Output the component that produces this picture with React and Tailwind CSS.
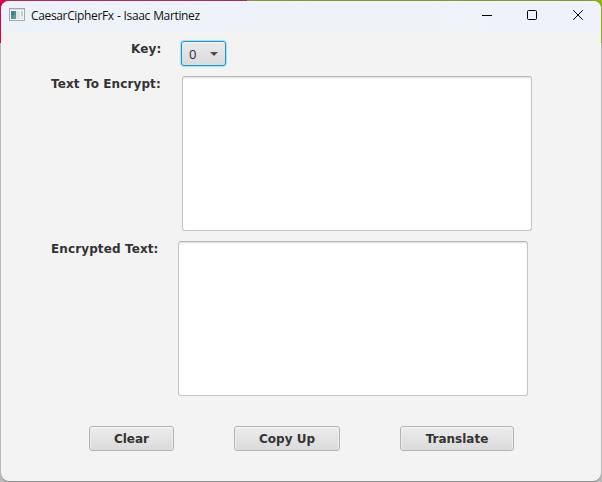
function AppIcon() {
  return (
    <svg width="16" height="14" viewBox="0 0 16 14" shapeRendering="crispEdges" className="shrink-0">
      <rect x="0.5" y="0.5" width="15" height="12" fill="#f4f6f7" stroke="#a3a9ad" />
      <rect x="1" y="1" width="14" height="1" fill="#d5dadd" />
      <rect x="2" y="3" width="5" height="8" fill="#4d8f94" />
      <rect x="2" y="3" width="3" height="4" fill="#4578a0" />
      <rect x="4" y="7" width="3" height="4" fill="#58a184" />
      <rect x="7" y="3" width="4" height="8" fill="#e2e5e7" />
      <rect x="12" y="3" width="2" height="5" fill="#b9d3c6" />
      <rect x="12" y="8" width="2" height="3" fill="#dfe4e6" />
    </svg>
  );
}

function TitleBar() {
  return (
    <header className="flex h-[31px] items-start bg-linear-to-r from-[#ecf3f8] to-[#eff2fa] pl-2">
      <div className="pt-[7px]">
        <AppIcon />
      </div>
      <h1 className="ml-1.5 pt-[6px] font-['Open_Sans',sans-serif] text-[12px] leading-[18px] font-normal tracking-[-0.35px] [word-spacing:0.4px] whitespace-nowrap text-[#111]">
        CaesarCipherFx - Isaac Martinez
      </h1>
      <div className="ml-auto flex text-black">
        <button className="flex h-7 w-[45px] items-center justify-center" aria-label="Minimize">
          <svg width="10" height="10" fill="none" stroke="currentColor"><path d="M0 5.5H10" /></svg>
        </button>
        <button className="flex h-7 w-[45px] items-center justify-center" aria-label="Maximize">
          <svg width="10" height="10" fill="none" stroke="currentColor"><rect x=".5" y=".5" width="9" height="9" rx="1" /></svg>
        </button>
        <button className="flex h-7 w-[47px] items-center justify-center" aria-label="Close">
          <svg width="10" height="10" fill="none" stroke="currentColor"><path d="M.2 .2 9.8 9.8M9.8 .2 .2 9.8" /></svg>
        </button>
      </div>
    </header>
  );
}

const labelClass = "leading-4 tracking-[0.11px] whitespace-nowrap";
const areaClass =
  "block h-[155px] w-[350px] resize-none rounded-[3px] border border-[#c4c4c4] border-t-[#b6b6b6] bg-white shadow-[inset_0_2px_2px_-1px_#dedede] outline-none";
const buttonClass =
  "flex h-[25px] items-center justify-center rounded-[3px] border border-[#b4b4b4] bg-linear-to-b from-[#ededed] to-[#dadada] pt-px leading-4 shadow-[inset_0_1px_0_#f7f7f7,inset_1px_0_0_#ececec,inset_-1px_0_0_#ececec]";

export default function App() {
  return (
    <div className="h-[482px] w-[602px] overflow-hidden bg-[linear-gradient(to_bottom,transparent_43px,#b9b9b9_43px),linear-gradient(to_right,#d0044c_0,#b02a58_14px,#a52c58_247px,#84992c_247px,#84992c_588px,#8db600_596px)] p-px">
      <main className="flex h-[480px] w-[600px] flex-col overflow-hidden rounded-lg bg-[#f3f3f3] font-['DejaVu_Sans',sans-serif] text-[12px] font-bold text-[#333] shadow-[0_1px_0_#8e8e8e]">
        <TitleBar />
        <section className="flex items-start pt-[9px] pl-[130px]">
          <span className={`${labelClass} w-[49px]`}>Key:</span>
          <button className="ml-px flex h-[25px] w-[45px] items-center justify-between rounded-[3px] border border-[#149ccb] bg-linear-to-b from-[#eaeaea] to-[#dadada] pr-[7px] pl-[7px] font-normal text-[#2b2752] shadow-[0_0_1px_1px_#a9dceb,inset_0_1px_0_#f5f5f5]">
            <span className="pt-px font-['Open_Sans',sans-serif] text-[13px] leading-4">0</span>
            <svg width="8" height="4" fill="#4a4a4a"><path d="M0 0H8L4 4Z" /></svg>
          </button>
        </section>
        <section className="flex items-start pt-[10px] pl-[50px]">
          <label htmlFor="plain" className={`${labelClass} w-[131px]`}>Text To Encrypt:</label>
          <textarea id="plain" className={areaClass} />
        </section>
        <section className="flex items-start pt-[10px] pl-[50px]">
          <label htmlFor="cipher" className={`${labelClass} w-[127px]`}>Encrypted Text:</label>
          <textarea id="cipher" className={areaClass} />
        </section>
        <section className="flex gap-[60px] pt-[30px] pl-[88px]">
          <button className={`${buttonClass} w-[85px]`}>Clear</button>
          <button className={`${buttonClass} w-[106px]`}>Copy Up</button>
          <button className={`${buttonClass} w-[114px]`}>Translate</button>
        </section>
      </main>
    </div>
  );
}
